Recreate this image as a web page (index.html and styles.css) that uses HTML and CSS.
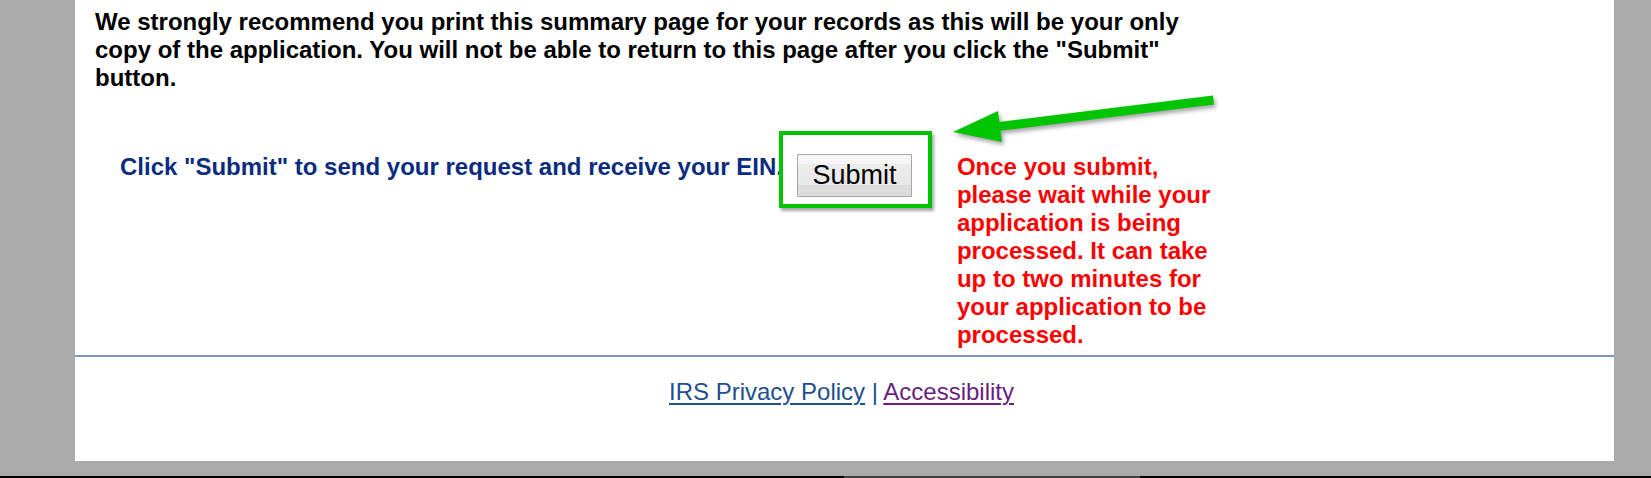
FILE: index.html
```html
<!DOCTYPE html>
<html lang="en">
<head>
<meta charset="utf-8">
<title>EIN Application Summary</title>
<link rel="stylesheet" href="styles.css">
</head>
<body>
<div class="screen">
  <div class="page">
    <p class="intro">We strongly recommend you print this summary page for your records as this will be your only copy of the application. You will not be able to return to this page after you click the "Submit" button.</p>

    <div class="submit-row">
      <p class="instruction">Click "Submit" to send your request and receive your EIN.</p>
      <button class="submit-btn" type="button">Submit</button>
      <p class="notice">Once you submit, please wait while your application is being processed. It can take up to two minutes for your application to be processed.</p>
    </div>

    <div class="divider"></div>

    <div class="footer">
      <a class="link" href="#privacy">IRS Privacy Policy</a> <span class="sep">|</span> <a class="link visited" href="#accessibility">Accessibility</a>
    </div>

    <div class="highlight-box"></div>
    <svg class="arrow" width="1539" height="461" viewBox="0 0 1539 461" aria-hidden="true">
      <g class="arrow-shape">
        <polygon points="1138,95.5 1139,104.5 925,130.8 924,122" fill="#00c400"/>
        <polygon points="878,132 923,111 927,142" fill="#00c400"/>
      </g>
    </svg>
  </div>
  <div class="bottom-gap"></div>
  <div class="taskbar">
    <div class="taskbar-thumb"></div>
  </div>
</div>
</body>
</html>
```

FILE: styles.css
```css
html, body {
  margin: 0;
  padding: 0;
}

body {
  width: 1651px;
  height: 478px;
  overflow: hidden;
  background: #aaaaaa;
  font-family: "Liberation Sans", Arial, sans-serif;
}

.screen {
  display: flex;
  flex-direction: column;
  width: 1651px;
  height: 478px;
}

.page {
  position: relative;
  margin-left: 75px;
  width: 1539px;
  height: 461px;
  background: #ffffff;
  box-sizing: border-box;
  display: flex;
  flex-direction: column;
}

.intro {
  margin: 0;
  padding: 8px 0 0 20px;
  width: 1120px;
  font-size: 24px;
  font-weight: bold;
  line-height: 28px;
  color: #000000;
}

.submit-row {
  display: flex;
  align-items: flex-start;
  margin-top: 61px;
  padding-left: 45px;
}

.instruction {
  margin: 0;
  white-space: nowrap;
  font-size: 24px;
  font-weight: bold;
  line-height: 27.6px;
  color: #0b2c7e;
}

.submit-btn {
  margin: 1px 0 0 14px;
  width: 115px;
  height: 43px;
  padding: 0;
  flex: none;
  border: 1px solid #a6a6a6;
  border-radius: 1px;
  background: linear-gradient(to bottom, #f5f5f5 0, #f5f5f5 22%, #ececec 22%, #e8e8e8 72%, #dcdcdc 72%, #dcdcdc 100%);
  font-family: "Liberation Sans", Arial, sans-serif;
  font-size: 27px;
  color: #000000;
  line-height: 1;
}

.notice {
  margin: 0 0 0 45px;
  width: 262px;
  font-size: 24px;
  font-weight: bold;
  line-height: 28px;
  color: #ff0000;
}

.divider {
  margin-top: 6px;
  height: 2px;
  background: #7f98b8;
}

.footer {
  margin-top: 21px;
  padding-right: 6px;
  text-align: center;
  font-size: 24px;
  line-height: 27.6px;
  color: #22508e;
}

.link {
  color: #1f4f8c;
  text-decoration: underline;
  text-decoration-thickness: 2px;
  text-underline-offset: 3px;
}

.link.visited {
  color: #6a1f7e;
}

.sep {
  color: #22508e;
}

.highlight-box {
  position: absolute;
  left: 704px;
  top: 131px;
  width: 145px;
  height: 69px;
  border: 4px solid #00c400;
  box-shadow: 2px 3px 3px rgba(0, 0, 0, 0.35);
  pointer-events: none;
}

.arrow {
  position: absolute;
  left: 0;
  top: 0;
  pointer-events: none;
}

.arrow-shape {
  filter: drop-shadow(2px 3px 2px rgba(0, 0, 0, 0.35));
}

.bottom-gap {
  height: 15px;
}

.taskbar {
  height: 2px;
  background: #000000;
  display: flex;
}

.taskbar-thumb {
  margin-left: 844px;
  width: 296px;
  background: #3f3f3f;
}
```
